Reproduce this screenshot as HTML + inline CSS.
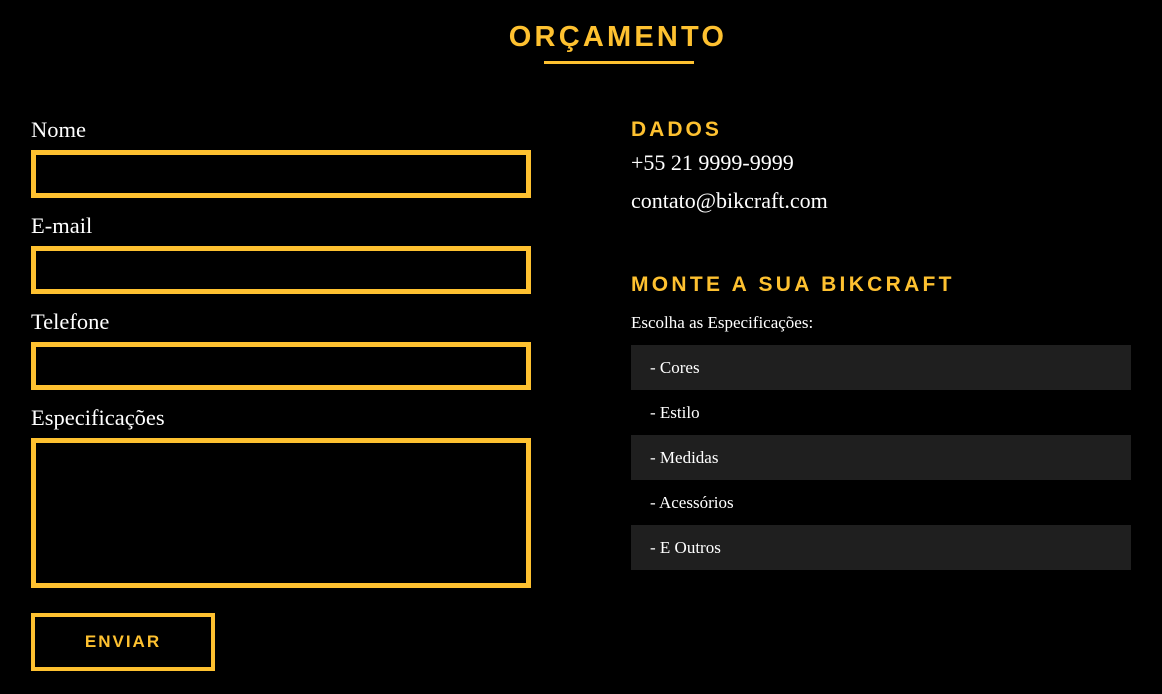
<!DOCTYPE html>
<html><head><meta charset="utf-8"><style>
*{margin:0;padding:0;box-sizing:border-box}
body{width:1162px;height:694px;background:#000;position:relative;overflow:hidden;font-family:"Liberation Serif",serif;color:#fff}
.a{position:absolute}
.t{font-family:"Liberation Sans",sans-serif;font-weight:bold;color:#fec130;white-space:nowrap}
.lbl{font-size:22.5px;line-height:24px;left:31px}
.in{left:31px;width:500px;border:5px solid #fec130;background:#000}
.row{left:631px;width:500px;height:45px;line-height:46px;padding-left:19px;font-size:17px}
.dk{background:#1f1f1f}
</style></head><body>
<div class="a t" style="left:0;width:1236px;text-align:center;top:20px;font-size:29px;letter-spacing:3.2px;line-height:34px">ORÇAMENTO</div>
<div class="a" style="left:544px;top:61px;width:150px;height:3px;background:#fec130"></div>

<div class="a lbl" style="top:118px">Nome</div>
<div class="a in" style="top:150px;height:48px"></div>
<div class="a lbl" style="top:214px">E-mail</div>
<div class="a in" style="top:246px;height:48px"></div>
<div class="a lbl" style="top:310px">Telefone</div>
<div class="a in" style="top:342px;height:48px"></div>
<div class="a lbl" style="top:406px">Especificações</div>
<div class="a in" style="top:438px;height:150px"></div>
<div class="a t" style="left:31px;top:613px;width:184px;height:58px;border:4px solid #fec130;text-align:center;line-height:50px;font-size:17px;letter-spacing:2px">ENVIAR</div>

<div class="a t" style="left:631px;top:118px;font-size:21px;letter-spacing:3px;line-height:24px">DADOS</div>
<div class="a" style="left:631px;top:151px;font-size:22px;line-height:24px">+55 21 9999-9999</div>
<div class="a" style="left:631px;top:189px;font-size:22px;line-height:24px">contato@bikcraft.com</div>
<div class="a t" style="left:631px;top:273px;font-size:21px;letter-spacing:3.3px;line-height:24px">MONTE A SUA BIKCRAFT</div>
<div class="a" style="left:631px;top:313px;font-size:17px;line-height:20px">Escolha as Especificações:</div>
<div class="a row dk" style="top:345px">- Cores</div>
<div class="a row" style="top:390px">- Estilo</div>
<div class="a row dk" style="top:435px">- Medidas</div>
<div class="a row" style="top:480px">- Acessórios</div>
<div class="a row dk" style="top:525px">- E Outros</div>
</body></html>
